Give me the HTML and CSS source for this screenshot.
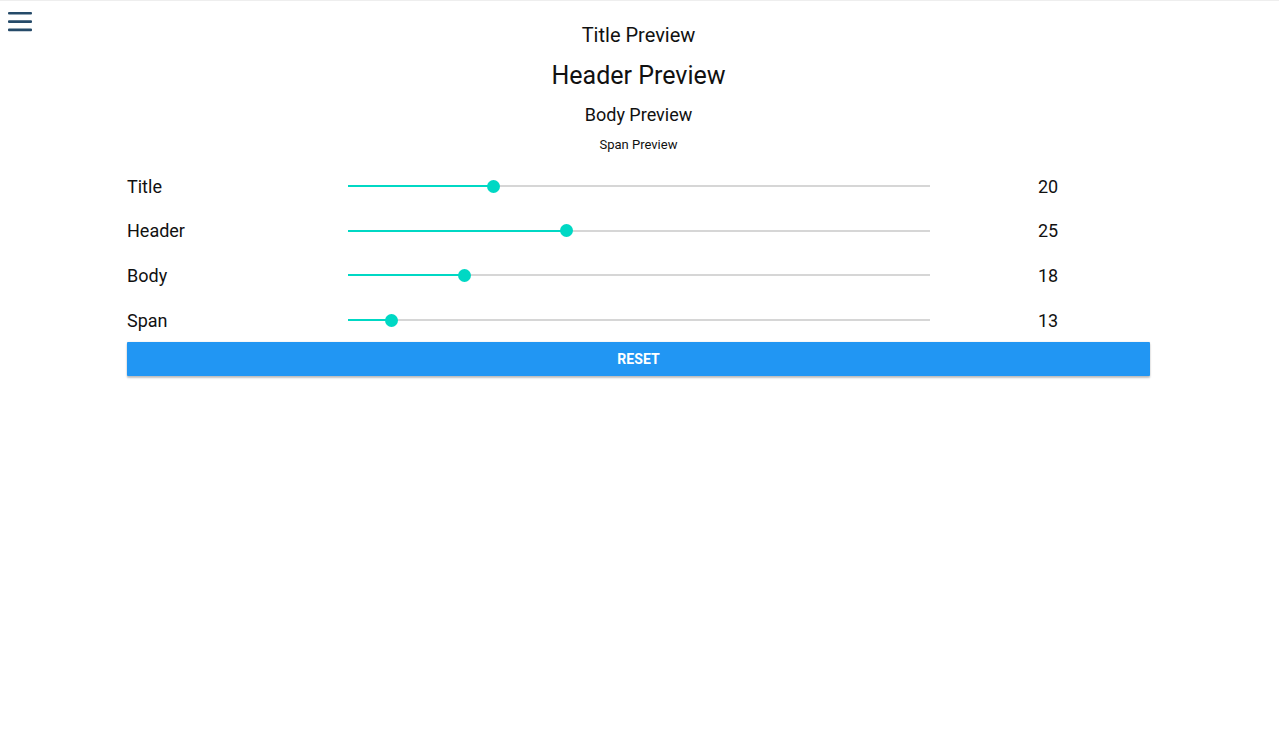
FILE: index.html
```html
<!DOCTYPE html>
<html lang="en">
<head>
<meta charset="utf-8">
<title>Font sizes</title>
<link rel="stylesheet" href="styles.css">
</head>
<body>
<button class="menu-btn" aria-label="Menu">
  <svg width="26" height="22" viewBox="0 0 26 22">
    <rect x="1" y="1" width="24" height="2.6" rx="1" fill="#254a69"/>
    <rect x="1" y="9.3" width="24" height="2.6" rx="1" fill="#254a69"/>
    <rect x="1" y="17.6" width="24" height="2.6" rx="1" fill="#254a69"/>
  </svg>
</button>
<main class="page">
  <section class="previews">
    <div class="pv pv-title">Title Preview</div>
    <div class="pv pv-header">Header Preview</div>
    <div class="pv pv-body">Body Preview</div>
    <div class="pv pv-span">Span Preview</div>
  </section>
  <section class="controls">
    <div class="row">
      <div class="label">Title</div>
      <div class="slider"><div class="track"><div class="fill" style="width:25%"></div><div class="thumb" style="left:25%"></div></div></div>
      <div class="value">20</div>
    </div>
    <div class="row">
      <div class="label">Header</div>
      <div class="slider"><div class="track"><div class="fill" style="width:37.5%"></div><div class="thumb" style="left:37.5%"></div></div></div>
      <div class="value">25</div>
    </div>
    <div class="row">
      <div class="label">Body</div>
      <div class="slider"><div class="track"><div class="fill" style="width:20%"></div><div class="thumb" style="left:20%"></div></div></div>
      <div class="value">18</div>
    </div>
    <div class="row">
      <div class="label">Span</div>
      <div class="slider"><div class="track"><div class="fill" style="width:7.5%"></div><div class="thumb" style="left:7.5%"></div></div></div>
      <div class="value">13</div>
    </div>
    <button class="reset">RESET</button>
  </section>
</main>
</body>
</html>
```
FILE: styles.css
```css
html, body {
  margin: 0;
  padding: 0;
  background: #ffffff;
}
body {
  font-family: Roboto, "Liberation Sans", sans-serif;
  color: #111111;
  border-top: 1px solid #eeeeee;
  min-height: 743px;
}
.menu-btn {
  position: absolute;
  left: 7px;
  top: 11px;
  padding: 0;
  margin: 0;
  border: 0;
  background: transparent;
  width: 26px;
  height: 22px;
  display: block;
}
.menu-btn svg { display: block; }
.page {
  padding: 21px 129px 0 127px;
}
.previews {
  display: flex;
  flex-direction: column;
  align-items: center;
}
.pv { text-align: center; color: #111; }
.pv-title { font-size: 20px; line-height: 26px; }
.pv-header { font-size: 25px; line-height: 30px; margin-top: 13px; }
.pv-body { font-size: 18px; line-height: 24px; margin-top: 12px; }
.pv-span { font-size: 13px; line-height: 16px; margin-top: 10px; }
.controls {
  margin-top: 11px;
}
.row {
  display: grid;
  grid-template-columns: 221px 582px 1fr;
  align-items: center;
  height: 44.6px;
}
.label, .value {
  font-size: 18px;
  color: #111;
}
.value { padding-left: 108px; }
.slider {
  height: 20px;
  display: flex;
  align-items: center;
}
.track {
  position: relative;
  width: 100%;
  height: 2px;
  background: #d6d6d6;
}
.fill {
  height: 100%;
  background: #00d8c4;
}
.thumb {
  position: absolute;
  top: 50%;
  width: 13px;
  height: 13px;
  margin-left: -6.5px;
  margin-top: -6.5px;
  border-radius: 50%;
  background: #00d8c4;
}
.reset {
  display: block;
  width: 100%;
  height: 34px;
  margin: 0;
  border: 0;
  border-radius: 1px;
  background: #2196f3;
  color: #ffffff;
  font-family: Roboto, "Liberation Sans", sans-serif;
  font-weight: 700;
  font-size: 14px;
  letter-spacing: 0.1px;
  box-shadow: 0 2px 2px rgba(0,0,0,0.24), 0 0 2px rgba(0,0,0,0.12);
}
```
